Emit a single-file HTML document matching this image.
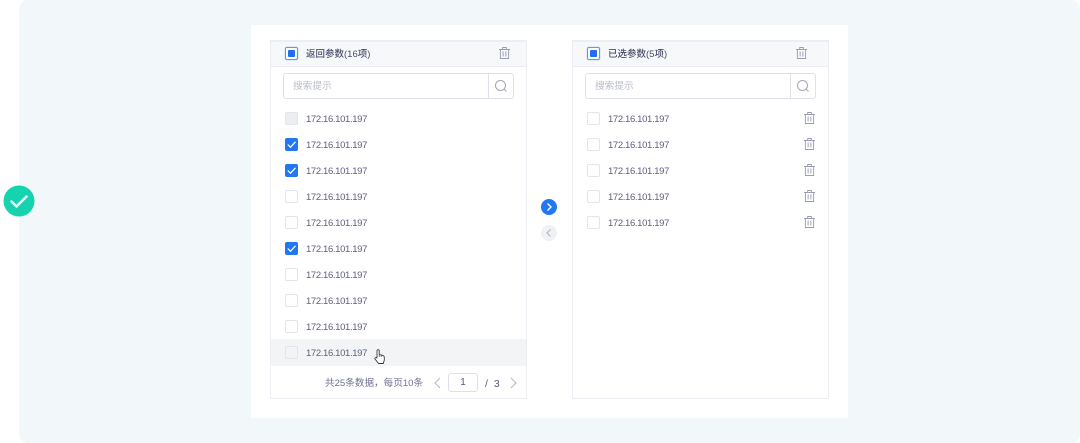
<!DOCTYPE html>
<html lang="zh"><head><meta charset="utf-8"><style>
*{box-sizing:border-box}
html,body{margin:0;padding:0;width:1080px;height:443px;overflow:hidden;background:#fff;font-family:"Liberation Sans","Noto Sans CJK SC",sans-serif}
div,svg{position:absolute}
.bg{left:19px;top:0;width:1061px;height:443px;background:#f2f7fa;border-radius:9px}
.card{left:251px;top:25px;width:597px;height:393px;background:#fff}
.panel{top:40px;height:359px;background:#fff;border:1px solid #eceef3}
.head{left:0;top:0;right:0;height:26px;background:#f7f8fa;border-top:1px solid #eceef3;border-bottom:1px solid #eceef3}
.ttl{top:6px;left:35px;font-size:9.500px;line-height:14px;color:#4a4d6b;white-space:nowrap;font-weight:500}
.search{top:32px;left:12px;width:231px;height:26px;border:1px solid #dfe1ea;border-radius:3px;background:#fff}
.ph{left:9px;top:6px;font-size:9.700px;line-height:14px;color:#b9bccb;white-space:nowrap}
.sb{right:24px;top:0;width:1px;height:24px;background:#dfe1ea}
.cb{left:14px;width:13px;height:13px;border:1px solid #e3e5ec;border-radius:2px;background:#fff}
.cb.dis{background:#eceef2}
.cb.on{background:#2277f2;border-color:#2277f2}
.cb.half{left:14px;top:5px;border:1px solid #5b9bf5;box-shadow:0 0 0 .5px #c5dcfb;background:#fff}
.cb.half:after{content:"";position:absolute;left:2px;top:2px;width:7px;height:7px;background:#1f6ff0;border-radius:1px}
.ip{left:35px;margin-top:1px;font-size:9.500px;letter-spacing:-.36px;line-height:14px;color:#5d6080;white-space:nowrap}
.hover{left:0;top:298px;width:255px;height:27px;background:#f3f4f6}
.pg{font-size:9.600px;line-height:14px;color:#6f7290;white-space:nowrap}
</style></head><body>
<div class="bg"></div>
<div class="card"></div>

<svg style="left:3px;top:185px" width="32" height="32" viewBox="0 0 32 32"><circle cx="16" cy="16" r="15.500" fill="#15d3ae"/><path d="M8.500 16.500l5 5L23.500 11.500" fill="none" stroke="#fff" stroke-width="2.400" stroke-linecap="round" stroke-linejoin="round"/></svg>

<div class="panel" style="left:270px;width:257px">
  <div class="head"><div class="cb half"></div><div class="ttl">返回参数(16项)</div>
    <svg style="left:228px;top:5px" width="11" height="12" viewBox="0 0 12 12" preserveAspectRatio="none" fill="none" stroke="#9a9db1" stroke-width="1"><path d="M0 2.500h12M4 2.500V.5h4v2M1.500 2.500v9h9v-9M4.500 4.500v5M7.500 4.500v5"/></svg>
  </div>
  <div class="search"><div class="ph">搜索提示</div><div class="sb"></div>
    <svg style="left:210px;top:5px" width="14" height="14" viewBox="0 0 14 14" fill="none" stroke="#a3a6b8" stroke-width="1"><circle cx="6.500" cy="6.500" r="5"/><path d="M10 10l2.500 2.500"/></svg>
  </div>
  <div class="cb dis" style="top:71px"></div><div class="ip" style="top:71px">172.16.101.197</div>
  <div class="cb on" style="top:97px"><svg style="left:0;top:0" width="11" height="11" viewBox="0 0 11 11"><path d="M1.800 5.500l2.700 2.700L9.500 2.800" fill="none" stroke="#fff" stroke-width="1.200"/></svg></div><div class="ip" style="top:97px">172.16.101.197</div>
  <div class="cb on" style="top:123px"><svg style="left:0;top:0" width="11" height="11" viewBox="0 0 11 11"><path d="M1.800 5.500l2.700 2.700L9.500 2.800" fill="none" stroke="#fff" stroke-width="1.200"/></svg></div><div class="ip" style="top:123px">172.16.101.197</div>
  <div class="cb" style="top:149px"></div><div class="ip" style="top:149px">172.16.101.197</div>
  <div class="cb" style="top:175px"></div><div class="ip" style="top:175px">172.16.101.197</div>
  <div class="cb on" style="top:201px"><svg style="left:0;top:0" width="11" height="11" viewBox="0 0 11 11"><path d="M1.800 5.500l2.700 2.700L9.500 2.800" fill="none" stroke="#fff" stroke-width="1.200"/></svg></div><div class="ip" style="top:201px">172.16.101.197</div>
  <div class="cb" style="top:227px"></div><div class="ip" style="top:227px">172.16.101.197</div>
  <div class="cb" style="top:253px"></div><div class="ip" style="top:253px">172.16.101.197</div>
  <div class="cb" style="top:279px"></div><div class="ip" style="top:279px">172.16.101.197</div>
  <div class="hover"></div>
  <div class="cb" style="top:305px;background:#f3f4f6"></div><div class="ip" style="top:305px">172.16.101.197</div>
  <svg style="left:103px;top:308px" width="11" height="15" viewBox="0 0 11 15"><path d="M3 9V1.800a1.100 1.100 0 0 1 2.200 0V5.500l3.300.8c1.100.3 1.800 1 1.800 2.200V11l-1 3.500H4.500L1 10c-.7-1 1-2 2-1z" fill="#fff" stroke="#3a3a3a" stroke-width=".9" stroke-linejoin="round"/><path d="M5.200 5.500v2.500M7.200 6v2" stroke="#3a3a3a" stroke-width=".7" fill="none"/></svg>
  <div class="pg" style="left:54px;top:336px">共25条数据，每页10条</div>
  <svg style="left:162px;top:336px" width="9" height="12" viewBox="0 0 9 12"><path d="M7 1L2 6l5 5" fill="none" stroke="#b4b7c6"/></svg>
  <div style="left:177px;top:332px;width:30px;height:19px;border:1px solid #dfe1ea;border-radius:3px;background:#fff;font-size:10px;line-height:18px;text-align:center;color:#55587a">1</div>
  <div class="pg" style="left:214px;top:336px;color:#55587a;font-size:10.500px;word-spacing:3px">/ 3</div>
  <svg style="left:238px;top:336px" width="9" height="12" viewBox="0 0 9 12"><path d="M2 1l5 5-5 5" fill="none" stroke="#b4b7c6"/></svg>
</div>

<svg style="left:541px;top:199px" width="16" height="16" viewBox="0 0 16 16"><circle cx="8" cy="8" r="8" fill="#2277f2"/><path d="M6.500 4.500L10 8l-3.500 3.500" fill="none" stroke="#fff" stroke-width="1.400"/></svg>
<svg style="left:541px;top:225px" width="16" height="16" viewBox="0 0 16 16"><circle cx="8" cy="8" r="8" fill="#f0f1f4"/><path d="M9.500 4.500L6 8l3.500 3.500" fill="none" stroke="#b4b7c6" stroke-width="1.200"/></svg>

<div class="panel" style="left:572px;width:257px">
  <div class="head"><div class="cb half"></div><div class="ttl">已选参数(5项)</div>
    <svg style="left:223px;top:5px" width="11" height="12" viewBox="0 0 12 12" preserveAspectRatio="none" fill="none" stroke="#9a9db1" stroke-width="1"><path d="M0 2.500h12M4 2.500V.5h4v2M1.500 2.500v9h9v-9M4.500 4.500v5M7.500 4.500v5"/></svg>
  </div>
  <div class="search"><div class="ph">搜索提示</div><div class="sb"></div>
    <svg style="left:210px;top:5px" width="14" height="14" viewBox="0 0 14 14" fill="none" stroke="#a3a6b8" stroke-width="1"><circle cx="6.500" cy="6.500" r="5"/><path d="M10 10l2.500 2.500"/></svg>
  </div>
  <div class="cb" style="top:71px"></div><div class="ip" style="top:71px">172.16.101.197</div>
  <svg style="left:231px;top:71px" width="11" height="12" viewBox="0 0 12 12" preserveAspectRatio="none" fill="none" stroke="#9a9db1" stroke-width="1"><path d="M0 2.500h12M4 2.500V.5h4v2M1.500 2.500v9h9v-9M4.500 4.500v5M7.500 4.500v5"/></svg>
  <div class="cb" style="top:97px"></div><div class="ip" style="top:97px">172.16.101.197</div>
  <svg style="left:231px;top:97px" width="11" height="12" viewBox="0 0 12 12" preserveAspectRatio="none" fill="none" stroke="#9a9db1" stroke-width="1"><path d="M0 2.500h12M4 2.500V.5h4v2M1.500 2.500v9h9v-9M4.500 4.500v5M7.500 4.500v5"/></svg>
  <div class="cb" style="top:123px"></div><div class="ip" style="top:123px">172.16.101.197</div>
  <svg style="left:231px;top:123px" width="11" height="12" viewBox="0 0 12 12" preserveAspectRatio="none" fill="none" stroke="#9a9db1" stroke-width="1"><path d="M0 2.500h12M4 2.500V.5h4v2M1.500 2.500v9h9v-9M4.500 4.500v5M7.500 4.500v5"/></svg>
  <div class="cb" style="top:149px"></div><div class="ip" style="top:149px">172.16.101.197</div>
  <svg style="left:231px;top:149px" width="11" height="12" viewBox="0 0 12 12" preserveAspectRatio="none" fill="none" stroke="#9a9db1" stroke-width="1"><path d="M0 2.500h12M4 2.500V.5h4v2M1.500 2.500v9h9v-9M4.500 4.500v5M7.500 4.500v5"/></svg>
  <div class="cb" style="top:175px"></div><div class="ip" style="top:175px">172.16.101.197</div>
  <svg style="left:231px;top:175px" width="11" height="12" viewBox="0 0 12 12" preserveAspectRatio="none" fill="none" stroke="#9a9db1" stroke-width="1"><path d="M0 2.500h12M4 2.500V.5h4v2M1.500 2.500v9h9v-9M4.500 4.500v5M7.500 4.500v5"/></svg>
</div>
</body></html>
